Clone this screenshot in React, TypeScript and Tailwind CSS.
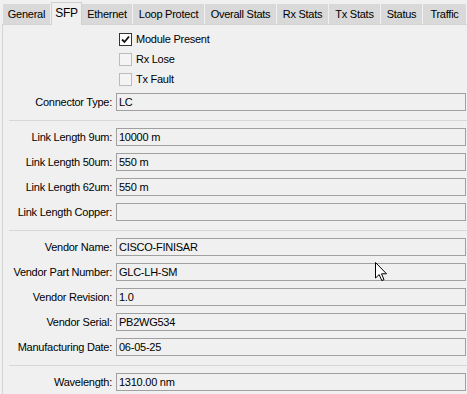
import React from 'react'

const tabs = [
  { name: 'General', w: 'w-[48px]' },
  { name: 'SFP', w: 'w-[35px]', active: true },
  { name: 'Ethernet', w: 'w-[51px]' },
  { name: 'Loop Protect', w: 'w-[72px]' },
  { name: 'Overall Stats', w: 'w-[72px]' },
  { name: 'Rx Stats', w: 'w-[52px]' },
  { name: 'Tx Stats', w: 'w-[52px]' },
  { name: 'Status', w: 'w-[42px]' },
  { name: 'Traffic', w: 'w-[44px]' },
]

function Check({ label, checked }: { label: string; checked?: boolean }) {
  return (
    <div className="h-[20px] flex items-center pl-[116px]">
      <div
        className={
          'w-[13px] h-[13px] border flex items-center justify-center ' +
          (checked ? 'border-[#333333] bg-white' : 'border-[#bcbcbc] bg-[#f4f4f4]')
        }
      >
        {checked && (
          <svg width="9" height="9" viewBox="0 0 9 9">
            <path d="M1 4.5 L3.5 7 L8 1.5" fill="none" stroke="#111" strokeWidth="1.8" />
          </svg>
        )}
      </div>
      <span className="ml-[4px]">{label}</span>
    </div>
  )
}

function Field({ label, value }: { label: string; value: string }) {
  return (
    <div className="h-[25px] flex items-start">
      <div className="w-[116px] h-[18px] pr-[4px] flex items-center justify-end">{label}</div>
      <div className="w-[350px] h-[18px] border border-[#a0a0a0] bg-[#f0f0f0] flex items-center pl-[2px]">
        {value}
      </div>
    </div>
  )
}

function Sep() {
  return (
    <div className="h-[10px] pt-[2px] pl-[9px]">
      <div className="h-[1px] bg-[#d7d7d7]" />
    </div>
  )
}

export default function App() {
  return (
    <div
      className="relative w-[467px] h-[394px] overflow-hidden bg-[#f0f0f0] text-[11px] tracking-[-0.25px] text-black"
      style={{ fontFamily: '"Liberation Sans", Arial, sans-serif' }}
    >
      <div className="flex h-[24px] pl-[3px] items-end">
        {tabs.map((t) =>
          t.active ? (
            <div
              key={t.name}
              className={t.w + ' relative z-10 h-[23px] -mb-[1px] bg-[#f0f0f0] border border-b-0 border-[#cfcfcf] flex items-center justify-center text-[12px] tracking-[-0.2px] pb-[2px]'}
            >
              {t.name}
            </div>
          ) : (
            <div
              key={t.name}
              className={t.w + ' shrink-0 h-[20px] bg-[#d9d9d9] border-r border-[#f0f0f0] flex items-center justify-center'}
            >
              {t.name}
            </div>
          ),
        )}
      </div>
      <div className="ml-[2px] border-l border-t border-[#d4d4d4] h-[370px] pt-[4px]">
        <Check label="Module Present" checked />
        <Check label="Rx Lose" />
        <Check label="Tx Fault" />
        <div className="h-[4px]" />
        <div className="-ml-[3px]">
          <Field label="Connector Type:" value="LC" />
          <Sep />
          <Field label="Link Length 9um:" value="10000 m" />
          <Field label="Link Length 50um:" value="550 m" />
          <Field label="Link Length 62um:" value="550 m" />
          <Field label="Link Length Copper:" value="" />
          <Sep />
          <Field label="Vendor Name:" value="CISCO-FINISAR" />
          <Field label="Vendor Part Number:" value="GLC-LH-SM" />
          <Field label="Vendor Revision:" value="1.0" />
          <Field label="Vendor Serial:" value="PB2WG534" />
          <Field label="Manufacturing Date:" value="06-05-25" />
          <Sep />
          <Field label="Wavelength:" value="1310.00 nm" />
        </div>
      </div>
      <svg className="absolute left-[375px] top-[262px]" width="13" height="20" viewBox="0 0 13 20">
        <path
          d="M0.5 0.5 L0.5 16 L4.2 12.6 L6.8 18.6 L9 17.6 L6.5 11.8 L11.5 11.8 Z"
          fill="white"
          stroke="black"
          strokeWidth="1"
          strokeLinejoin="round"
        />
      </svg>
    </div>
  )
}
